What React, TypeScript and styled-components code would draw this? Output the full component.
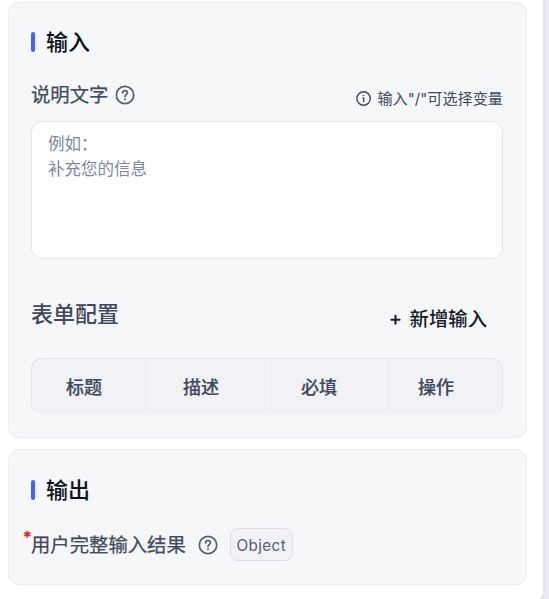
import React from "react";
import styled, { createGlobalStyle } from "styled-components";

const GlobalStyle = createGlobalStyle`
  *, *::before, *::after { box-sizing: border-box; }
  html, body { margin: 0; padding: 0; background: #ebebf3; overflow: hidden; }
  body { font-family: Inter, "Noto Sans CJK SC", sans-serif; color: #41495d; }
`;

const Panel = styled.main`
  width: 545px;
  height: 603px;
  padding: 2px 16px 0 8px;
  background: #fff;
  border-right: 2px solid #dfe1eb;
  border-bottom: 2px solid #dfe1eb;
  border-radius: 0 0 11px 0;
  display: flex;
  flex-direction: column;
  gap: 11px;
`;

const Card = styled.section<{ $height: number; $top: number }>`
  width: 519px;
  height: ${(p) => p.$height}px;
  flex: none;
  padding: ${(p) => p.$top}px 23px 0 22px;
  background: #f5f7f9;
  border: 1px solid #ebebf3;
  border-radius: 11px;
`;

const SectionTitle = styled.h2`
  margin: 0;
  height: 32px;
  display: flex;
  align-items: center;
  gap: 11px;
  font-size: 22px;
  font-weight: 500;
  line-height: 32px;
  color: #0d111e;
  white-space: nowrap;

  &::before {
    content: "";
    width: 4px;
    height: 20px;
    border-radius: 2px;
    background: #4062ff;
  }
`;

const FieldHeader = styled.div`
  height: 32px;
  margin-top: 21px;
  display: flex;
  align-items: center;
  justify-content: space-between;
  white-space: nowrap;
`;

const Label = styled.div<{ $gap: number }>`
  display: flex;
  align-items: center;
  gap: ${(p) => p.$gap}px;
  font-size: 19.35px;
  font-weight: 400;
  -webkit-text-stroke: 0.25px currentColor;
  line-height: 28px;
`;

const Hint = styled.div`
  display: flex;
  align-items: center;
  gap: 5px;
  padding-top: 7px;
  font-size: 15.15px;
  line-height: 22px;
`;

const PromptInput = styled.textarea`
  display: block;
  width: 472px;
  height: 138px;
  margin: 10px 0 0;
  padding: 10px 16px;
  resize: none;
  outline: none;
  border: 1px solid #e2e5ed;
  border-radius: 11px;
  background: #fff;
  font: 400 16.5px/25px Inter, "Noto Sans CJK SC", sans-serif;

  &::placeholder { color: #7d879f; opacity: 1; }
`;

const FormHeader = styled.div`
  height: 40px;
  margin-top: 39px;
  display: flex;
  justify-content: space-between;
  white-space: nowrap;
`;

const FormTitle = styled.h3`
  margin: 0;
  font-size: 22px;
  line-height: 33px;
  font-weight: 500;
`;

const AddButton = styled.button`
  border: 0;
  background: none;
  margin: 5px 16px 0 0;
  padding: 0;
  height: 32px;
  display: flex;
  align-items: center;
  gap: 9px;
  font: 500 19.35px/32px Inter, "Noto Sans CJK SC", sans-serif;
  color: #161b29;
`;

const Columns = styled.div`
  width: 472px;
  height: 56px;
  margin-top: 20px;
  display: grid;
  grid-template-columns: 118px 118px 117px 117px;
  overflow: hidden;
  background: #f1f1f6;
  border: 1px solid #e2e5ed;
  border-bottom-color: #f1f1f6;
  border-radius: 11px;
`;

const ColumnCell = styled.div`
  padding-left: 33px;
  line-height: 58px;
  font-size: 18px;
  font-weight: 500;
  -webkit-text-stroke: 0.2px currentColor;
  border-right: 1px solid #f8f8fb;

  &:first-child { padding-left: 34px; }
  &:last-child { border-right: 0; }
`;

const OutputRow = styled.div`
  height: 34px;
  margin-top: 21px;
  display: flex;
  align-items: center;
  gap: 12px;
  white-space: nowrap;
`;

const RequiredLabel = styled(Label)`
  position: relative;
  padding-top: 1px;
`;

const RequiredMark = styled.span`
  position: absolute;
  left: -8px;
  top: -5px;
  color: #df1c1c;
  font: 600 16px/24px Inter, sans-serif;
`;

const TypeTag = styled.span`
  width: 63px;
  height: 33px;
  border: 1px solid #dcdfeb;
  border-radius: 8px;
  background: #f1f1f6;
  color: #535d77;
  font-size: 15.2px;
  line-height: 33px;
  letter-spacing: 0.4px;
  text-align: center;
`;

const Icon = styled.svg`
  display: block;
  flex: none;
  fill: none;
  stroke: #535d77;
  stroke-linecap: round;
  stroke-linejoin: round;
`;

const HelpIcon = () => (
  <Icon width="20" height="20" viewBox="0 0 20 20" strokeWidth="1.7">
    <circle cx="10" cy="10" r="8.7" />
    <path d="M7.6 7.8C7.8 6.4 8.7 5.7 10 5.7c1.4 0 2.4.8 2.4 2.1 0 1.8-2.4 1.8-2.4 3.7" />
    <path d="M10 14.1v.1" strokeWidth="1.9" />
  </Icon>
);

const DarkIcon = styled(Icon)`
  stroke: currentColor;
`;

const InfoIcon = () => (
  <DarkIcon width="16" height="16" viewBox="0 0 16 16" strokeWidth="1.4">
    <circle cx="7.6" cy="7.5" r="6.7" />
    <path d="M7 7h.7v3.6M7.6 4.5v.1" />
  </DarkIcon>
);

const PlusIcon = () => (
  <DarkIcon width="12" height="12" viewBox="0 0 12 12" strokeWidth="2">
    <path d="M6.5 2.7v8.1M2.4 6.8h8.2" />
  </DarkIcon>
);

const columns = ["标题", "描述", "必填", "操作"];

export default function App() {
  return (
    <>
      <GlobalStyle />
      <Panel>
        <Card $height={436} $top={23}>
          <SectionTitle>输入</SectionTitle>
          <FieldHeader>
            <Label $gap={7}>说明文字<HelpIcon /></Label>
            <Hint><InfoIcon />输入"/"可选择变量</Hint>
          </FieldHeader>
          <PromptInput placeholder={"例如：\n补充您的信息"} />
          <FormHeader>
            <FormTitle>表单配置</FormTitle>
            <AddButton><PlusIcon />新增输入</AddButton>
          </FormHeader>
          <Columns>
            {columns.map((name) => <ColumnCell key={name}>{name}</ColumnCell>)}
          </Columns>
        </Card>
        <Card $height={136} $top={24}>
          <SectionTitle>输出</SectionTitle>
          <OutputRow>
            <RequiredLabel $gap={12}>
              <RequiredMark>*</RequiredMark>
              用户完整输入结果<HelpIcon />
            </RequiredLabel>
            <TypeTag>Object</TypeTag>
          </OutputRow>
        </Card>
      </Panel>
    </>
  );
}
